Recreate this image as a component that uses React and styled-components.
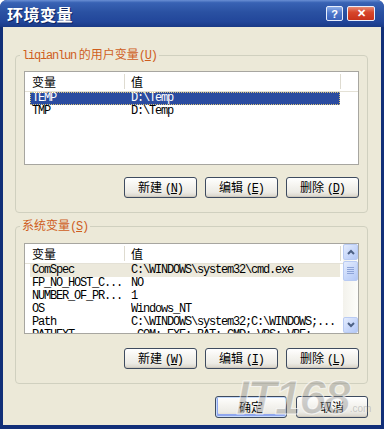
import React from 'react';
import styled, { createGlobalStyle } from 'styled-components';

const GlobalStyle = createGlobalStyle`
  html, body {
    margin: 0;
    padding: 0;
    background: #ffffff;
  }
  body {
    font-family: "Noto Sans CJK SC", "Liberation Sans", sans-serif;
    font-size: 12px;
  }
`;

const Window = styled.div`
  position: relative;
  width: 384px;
  height: 429px;
  display: flex;
  flex-direction: column;
  background: #112f78;
  border-radius: 7px 7px 0 0;
  overflow: hidden;
`;

const TitleBar = styled.div`
  height: 27px;
  flex-shrink: 0;
  display: flex;
  align-items: center;
  padding: 0 9px 0 7px;
  background: linear-gradient(to bottom, #6a8fd4 0%, #3862b4 10%, #2a51a2 45%, #22469a 80%, #1a3a86 100%);
`;

const Title = styled.div`
  flex: 1;
  color: #ffffff;
  font-size: 16px;
  font-weight: 700;
  letter-spacing: 0.5px;
  text-shadow: 1px 1px 0 #0c2360;
`;

const TitleButton = styled.div`
  width: ${(p) => p.$w}px;
  height: 15px;
  margin-left: ${(p) => p.$gap}px;
  box-sizing: border-box;
  border: 1px solid #e8eefc;
  border-radius: 2px;
  display: flex;
  align-items: center;
  justify-content: center;
  color: #ffffff;
  font-family: "Liberation Sans", sans-serif;
  font-weight: 700;
  font-size: 11px;
  background: ${(p) =>
    p.$close
      ? 'linear-gradient(to bottom, #e88a74 0%, #d7472b 40%, #c8321a 100%)'
      : 'linear-gradient(to bottom, #8eaee8 0%, #4f78cc 45%, #3a62bb 100%)'};
`;

const Body = styled.div`
  flex: 1;
  margin: 0 3px 4px;
  background: #ece9d8;
  padding: 20px 13px 0 12px;
  display: flex;
  flex-direction: column;
`;

const Group = styled.fieldset`
  margin: ${(p) => p.$top}px 0 0;
  padding: ${(p) => p.$padTop}px 8px 14px;
  border: 1px solid #d0d0bf;
  border-radius: 4px;
  min-width: 0;
`;

const Legend = styled.legend`
  margin-left: -4px;
  padding: 0 2px;
  color: #cf5e1d;
  font-size: 12px;
  line-height: 14px;
`;

const Mono = styled.span`
  font-family: "Liberation Mono", monospace;
  letter-spacing: -1.2px;
`;

const List = styled.div`
  height: ${(p) => p.$h}px;
  box-sizing: border-box;
  border: 1px solid #a7a6a0;
  background: #ffffff;
  display: flex;
  overflow: hidden;
`;

const ListMain = styled.div`
  flex: 1;
  min-width: 0;
  overflow: hidden;
`;

const Header = styled.div`
  display: flex;
  height: 19px;
  border-bottom: 1px solid #e4e1d6;
`;

const HeaderCell = styled.div`
  position: relative;
  width: ${(p) => p.$w}px;
  padding-left: ${(p) => p.$pad}px;
  box-sizing: border-box;
  line-height: 19px;
  color: #000;
  &::after {
    content: '';
    position: absolute;
    right: 0;
    top: 2px;
    bottom: 2px;
    width: 1px;
    background: #dedbd0;
  }
`;

const Row = styled.div`
  display: flex;
  margin-left: 5px;
  width: 310px;
  height: 13px;
  box-sizing: border-box;
  line-height: 13px;
  white-space: nowrap;
  color: ${(p) => (p.$state === 'active' ? '#ffffff' : '#000000')};
  background: ${(p) =>
    p.$state === 'active' ? '#2b4ca0' : p.$state === 'inactive' ? '#ece9dc' : 'transparent'};
  outline: ${(p) => (p.$state === 'active' ? '1px dotted #d8c27a' : 'none')};
  outline-offset: -1px;
`;

const Cell = styled.div`
  width: ${(p) => p.$w}px;
  padding-left: ${(p) => p.$pad}px;
  box-sizing: border-box;
  overflow: hidden;
  font-family: "Liberation Mono", monospace;
  font-size: 12px;
  letter-spacing: -1.2px;
`;

const Scrollbar = styled.div`
  width: 15px;
  flex-shrink: 0;
  display: flex;
  flex-direction: column;
  background: linear-gradient(to right, #f3f2ec, #fdfdfa);
`;

const ScrollBtn = styled.div`
  height: ${(p) => p.$h}px;
  margin-top: ${(p) => p.$mt || 0}px;
  box-sizing: border-box;
  border: 1px solid #b9cbf3;
  border-radius: 2px;
  background: linear-gradient(135deg, #e4ecfd 0%, #c6d6fa 60%, #b4c8f6 100%);
  display: flex;
  align-items: center;
  justify-content: center;
`;

const Spacer = styled.div`
  flex: 1;
`;

const ButtonRow = styled.div`
  display: flex;
  justify-content: flex-end;
  gap: ${(p) => p.$gap}px;
  margin-top: ${(p) => p.$top}px;
`;

const Button = styled.button`
  width: ${(p) => p.$w}px;
  height: ${(p) => p.$h}px;
  box-sizing: border-box;
  padding: 0;
  border: 1px solid #3e4b5f;
  border-radius: 3px;
  background: linear-gradient(to bottom, #ffffff 0%, #f6f5f1 35%, #ecebe5 75%, #d8d3c8 100%);
  box-shadow: ${(p) =>
    p.$default ? 'inset 0 0 0 1px #c6dbfb, inset 1px -2px 0 1px #8fa6ee' : 'inset 0 -1px 0 #cfcabe'};
  font-family: "Noto Sans CJK SC", sans-serif;
  font-size: 12px;
  color: #000;
  line-height: 1;
`;

const Watermark = styled.div`
  position: absolute;
  left: 236px;
  top: 374px;
  display: flex;
  align-items: flex-end;
  pointer-events: none;
  color: rgba(140, 140, 140, 0.42);
  font-family: "Liberation Sans", sans-serif;
  font-style: italic;
  font-weight: 700;
`;

const WatermarkBig = styled.span`
  font-size: 48px;
  line-height: 48px;
  letter-spacing: -2px;
  -webkit-text-stroke: 1px rgba(255, 255, 255, 0.7);
`;

const WatermarkSmall = styled.span`
  font-size: 10px;
  font-style: normal;
  font-weight: 400;
  margin: 0 0 8px 1px;
`;

const Chevron = ({ up }) => (
  <svg width="8" height="6" viewBox="0 0 8 6">
    <path
      d={up ? 'M1 5 L4 2 L7 5' : 'M1 1 L4 4 L7 1'}
      fill="none"
      stroke="#4d6185"
      strokeWidth="2"
    />
  </svg>
);

const Grip = () => (
  <svg width="7" height="8" viewBox="0 0 7 8">
    {[1, 3, 5, 7].map((y) => (
      <line key={y} x1="0" y1={y - 0.5} x2="7" y2={y - 0.5} stroke="#8ea4d8" strokeWidth="1" />
    ))}
  </svg>
);

const Label = ({ text, hotkey }) => (
  <>
    {text} <Mono>(<u>{hotkey}</u>)</Mono>
  </>
);

const userVars = [
  { name: 'TEMP', value: 'D:\\Temp', state: 'active' },
  { name: 'TMP', value: 'D:\\Temp' },
];

const systemVars = [
  { name: 'ComSpec', value: 'C:\\WINDOWS\\system32\\cmd.exe', state: 'inactive' },
  { name: 'FP_NO_HOST_C...', value: 'NO' },
  { name: 'NUMBER_OF_PR...', value: '1' },
  { name: 'OS', value: 'Windows_NT' },
  { name: 'Path', value: 'C:\\WINDOWS\\system32;C:\\WINDOWS;...' },
  { name: 'PATHEXT', value: '.COM;.EXE;.BAT;.CMD;.VBS;.VBE;...' },
];

const VarTable = ({ rows }) => (
  <ListMain>
    <Header>
      <HeaderCell $w={100} $pad={7}>变量</HeaderCell>
      <HeaderCell $w={216} $pad={6}>值</HeaderCell>
    </Header>
    {rows.map((r) => (
      <Row key={r.name} $state={r.state}>
        <Cell $w={101} $pad={2}>{r.name}</Cell>
        <Cell $w={209} $pad={0}>{r.value}</Cell>
      </Row>
    ))}
  </ListMain>
);

export default function App() {
  return (
    <Window>
      <GlobalStyle />
      <TitleBar>
        <Title>环境变量</Title>
        <TitleButton $w={17} $gap={0}>?</TitleButton>
        <TitleButton $w={28} $gap={4} $close>✕</TitleButton>
      </TitleBar>
      <Body>
        <Group $top={0} $padTop={8}>
          <Legend>
            <Mono>liqianlun</Mono> 的用户变量<Mono>(<u>U</u>)</Mono>
          </Legend>
          <List $h={94}>
            <VarTable rows={userVars} />
          </List>
          <ButtonRow $gap={8} $top={12}>
            <Button $w={73} $h={21}><Label text="新建" hotkey="N" /></Button>
            <Button $w={73} $h={21}><Label text="编辑" hotkey="E" /></Button>
            <Button $w={73} $h={21}><Label text="删除" hotkey="D" /></Button>
          </ButtonRow>
        </Group>

        <Group $top={5} $padTop={9}>
          <Legend>
            系统变量<Mono>(<u>S</u>)</Mono>
          </Legend>
          <List $h={91}>
            <VarTable rows={systemVars} />
            <Scrollbar>
              <ScrollBtn $h={16}><Chevron up /></ScrollBtn>
              <ScrollBtn $h={20} $mt={1}><Grip /></ScrollBtn>
              <Spacer />
              <ScrollBtn $h={16}><Chevron /></ScrollBtn>
            </Scrollbar>
          </List>
          <ButtonRow $gap={8} $top={14}>
            <Button $w={73} $h={21}><Label text="新建" hotkey="W" /></Button>
            <Button $w={73} $h={21}><Label text="编辑" hotkey="I" /></Button>
            <Button $w={73} $h={21}><Label text="删除" hotkey="L" /></Button>
          </ButtonRow>
        </Group>

        <ButtonRow $gap={9} $top={12}>
          <Button $w={72} $h={22} $default>确定</Button>
          <Button $w={72} $h={22}>取消</Button>
        </ButtonRow>
      </Body>
      <Watermark>
        <WatermarkBig>IT168</WatermarkBig>
        <WatermarkSmall>.com</WatermarkSmall>
      </Watermark>
    </Window>
  );
}
